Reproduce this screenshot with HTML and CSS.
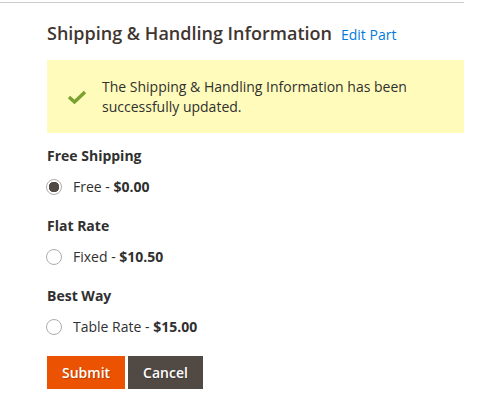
FILE: index.html
```html
<!DOCTYPE html>
<html>
<head>
<meta charset="utf-8">
<link rel="stylesheet" href="styles.css">
</head>
<body>
<div class="page">
  <div class="section">
    <div class="title-row">
      <h2 class="title">Shipping &amp; Handling Information</h2>
      <a class="edit-link" href="#">Edit Part</a>
    </div>
    <div class="message">
      <svg class="check" width="20" height="14" viewBox="0 0 20 14"><path d="M2 7 L7.5 12 L18 2" fill="none" stroke="#79a22e" stroke-width="3.4"/></svg>
      <div class="message-text">The Shipping &amp; Handling Information has been successfully updated.</div>
    </div>
    <form class="methods">
      <div class="group">
        <div class="group-title">Free Shipping</div>
        <label class="option"><span class="radio checked"></span><span>Free - <b>$0.00</b></span></label>
      </div>
      <div class="group">
        <div class="group-title">Flat Rate</div>
        <label class="option"><span class="radio"></span><span>Fixed - <b>$10.50</b></span></label>
      </div>
      <div class="group">
        <div class="group-title">Best Way</div>
        <label class="option"><span class="radio"></span><span>Table Rate - <b>$15.00</b></span></label>
      </div>
      <div class="actions">
        <button type="button" class="btn btn-primary">Submit</button>
        <button type="button" class="btn btn-secondary">Cancel</button>
      </div>
    </form>
  </div>
</div>
</body>
</html>
```
FILE: styles.css
```css
html, body {
  margin: 0;
  padding: 0;
  background: #fff;
}
body {
  font-family: "Open Sans", "DejaVu Sans", sans-serif;
  font-size: 14px;
  color: #303030;
}
.page {
  width: 464px;
  padding-top: 2px;
}
.section {
  border-top: 1px solid #cccccc;
  padding-left: 47px;
}
.title-row {
  display: flex;
  align-items: baseline;
  gap: 9px;
  margin-top: 17px;
}
.title {
  margin: 0;
  font-size: 18px;
  font-weight: 600;
  line-height: 26px;
  color: #41362f;
}
.edit-link {
  font-size: 14px;
  color: #007bdb;
  text-decoration: none;
}
.message {
  margin-top: 14px;
  background: #fffbbb;
  display: flex;
  align-items: center;
  padding: 17px 40px 17px 20px;
  line-height: 19.6px;
  color: #303030;
}
.check {
  flex: none;
  width: 20px;
  height: 14px;
  margin-right: 15px;
}
.methods {
  margin-top: 13px;
  display: flex;
  flex-direction: column;
  gap: 19px;
}
.group {
  display: flex;
  flex-direction: column;
  gap: 11px;
}
.group-title {
  font-weight: 700;
  line-height: 20px;
}
.option {
  display: flex;
  align-items: center;
  gap: 11px;
  line-height: 20px;
}
.option b {
  font-weight: 700;
}
.radio {
  flex: none;
  width: 16px;
  height: 16px;
  box-sizing: border-box;
  border: 1px solid #adadad;
  border-radius: 50%;
  margin-left: -1px;
  background: #fff;
}
.radio.checked {
  background: radial-gradient(circle, #514943 0 5px, #fff 5.5px);
}
.actions {
  display: flex;
  gap: 3px;
}
.btn {
  font-family: "Open Sans", "DejaVu Sans", sans-serif;
  font-size: 14px;
  font-weight: 600;
  line-height: 19px;
  padding: 7px 15px;
  border: 0;
  border-radius: 0;
  color: #fff;
  text-shadow: 1px 1px 1px rgba(0,0,0,0.25);
}
.btn-primary {
  background: #eb5202;
}
.btn-secondary {
  background: #514943;
}
```
